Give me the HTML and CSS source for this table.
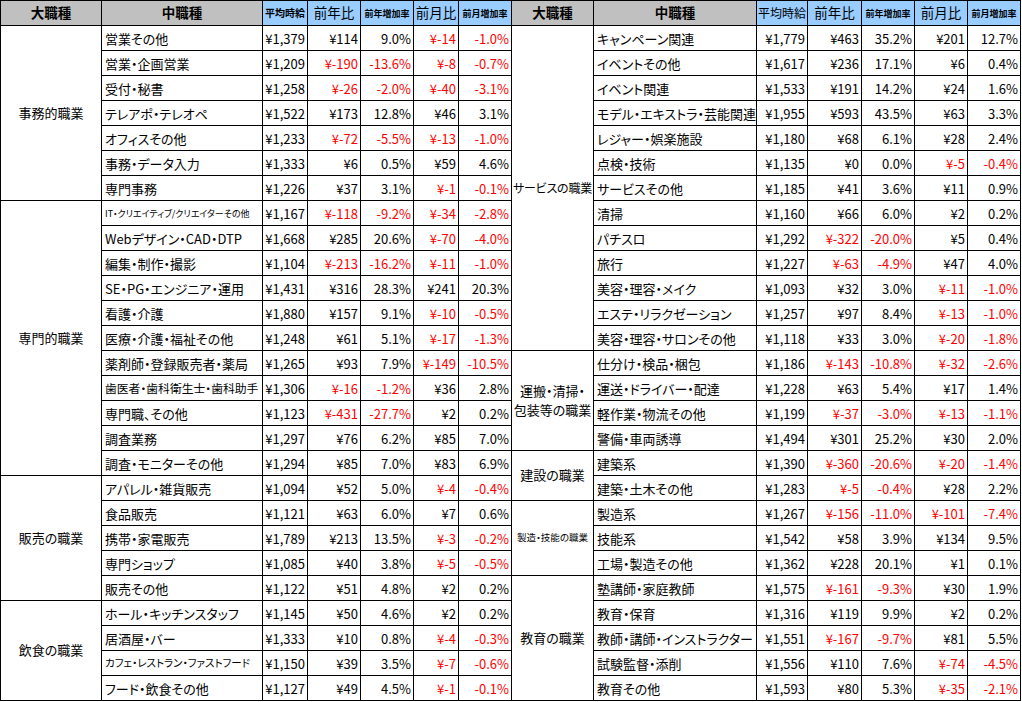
FILE: index.html
```html
<!DOCTYPE html>
<html lang="ja">
<head>
<meta charset="utf-8">
<title>職種別平均時給</title>
<link rel="stylesheet" href="styles.css">
</head>
<body>
<table class="sheet">
<colgroup>
<col class="w101"><col class="w161"><col class="w45"><col class="w53"><col class="w53"><col class="w45"><col class="w53">
<col class="w82"><col class="w163"><col class="w51"><col class="w54"><col class="w53"><col class="w53"><col class="w53">
</colgroup>
<thead>
<tr>
<th class="hg">大職種</th><th class="hg">中職種</th><th class="hb tiny">平均時給</th><th class="hb big">前年比</th><th class="hb tiny2">前年増加率</th><th class="hb big">前月比</th><th class="hb tiny2">前月増加率</th>
<th class="hg">大職種</th><th class="hg">中職種</th><th class="hb mid">平均時給</th><th class="hb big">前年比</th><th class="hb tiny2">前年増加率</th><th class="hb big">前月比</th><th class="hb tiny2">前月増加率</th>
</tr>
</thead>
<tbody>
<tr><td class="cat" rowspan="7">事務的職業</td><td class="job">営業その他</td><td class="n">¥1,379</td><td class="n">¥114</td><td class="n">9.0%</td><td class="n neg">¥-14</td><td class="n neg">-1.0%</td>
<td class="cat narrow" rowspan="13">サービスの職業</td><td class="job">キャンペーン関連</td><td class="n">¥1,779</td><td class="n">¥463</td><td class="n">35.2%</td><td class="n">¥201</td><td class="n">12.7%</td></tr>
<tr><td class="job">営業・企画営業</td><td class="n">¥1,209</td><td class="n neg">¥-190</td><td class="n neg">-13.6%</td><td class="n neg">¥-8</td><td class="n neg">-0.7%</td>
<td class="job">イベントその他</td><td class="n">¥1,617</td><td class="n">¥236</td><td class="n">17.1%</td><td class="n">¥6</td><td class="n">0.4%</td></tr>
<tr><td class="job">受付・秘書</td><td class="n">¥1,258</td><td class="n neg">¥-26</td><td class="n neg">-2.0%</td><td class="n neg">¥-40</td><td class="n neg">-3.1%</td>
<td class="job">イベント関連</td><td class="n">¥1,533</td><td class="n">¥191</td><td class="n">14.2%</td><td class="n">¥24</td><td class="n">1.6%</td></tr>
<tr><td class="job">テレアポ・テレオペ</td><td class="n">¥1,522</td><td class="n">¥173</td><td class="n">12.8%</td><td class="n">¥46</td><td class="n">3.1%</td>
<td class="job">モデル・エキストラ・芸能関連</td><td class="n">¥1,955</td><td class="n">¥593</td><td class="n">43.5%</td><td class="n">¥63</td><td class="n">3.3%</td></tr>
<tr><td class="job">オフィスその他</td><td class="n">¥1,233</td><td class="n neg">¥-72</td><td class="n neg">-5.5%</td><td class="n neg">¥-13</td><td class="n neg">-1.0%</td>
<td class="job">レジャー・娯楽施設</td><td class="n">¥1,180</td><td class="n">¥68</td><td class="n">6.1%</td><td class="n">¥28</td><td class="n">2.4%</td></tr>
<tr><td class="job">事務・データ入力</td><td class="n">¥1,333</td><td class="n">¥6</td><td class="n">0.5%</td><td class="n">¥59</td><td class="n">4.6%</td>
<td class="job">点検・技術</td><td class="n">¥1,135</td><td class="n">¥0</td><td class="n">0.0%</td><td class="n neg">¥-5</td><td class="n neg">-0.4%</td></tr>
<tr><td class="job">専門事務</td><td class="n">¥1,226</td><td class="n">¥37</td><td class="n">3.1%</td><td class="n neg">¥-1</td><td class="n neg">-0.1%</td>
<td class="job">サービスその他</td><td class="n">¥1,185</td><td class="n">¥41</td><td class="n">3.6%</td><td class="n">¥11</td><td class="n">0.9%</td></tr>

<tr><td class="cat" rowspan="11">専門的職業</td><td class="job xs">IT・クリエイティブ/クリエイターその他</td><td class="n">¥1,167</td><td class="n neg">¥-118</td><td class="n neg">-9.2%</td><td class="n neg">¥-34</td><td class="n neg">-2.8%</td>
<td class="job">清掃</td><td class="n">¥1,160</td><td class="n">¥66</td><td class="n">6.0%</td><td class="n">¥2</td><td class="n">0.2%</td></tr>
<tr><td class="job">Webデザイン・CAD・DTP</td><td class="n">¥1,668</td><td class="n">¥285</td><td class="n">20.6%</td><td class="n neg">¥-70</td><td class="n neg">-4.0%</td>
<td class="job">パチスロ</td><td class="n">¥1,292</td><td class="n neg">¥-322</td><td class="n neg">-20.0%</td><td class="n">¥5</td><td class="n">0.4%</td></tr>
<tr><td class="job">編集・制作・撮影</td><td class="n">¥1,104</td><td class="n neg">¥-213</td><td class="n neg">-16.2%</td><td class="n neg">¥-11</td><td class="n neg">-1.0%</td>
<td class="job">旅行</td><td class="n">¥1,227</td><td class="n neg">¥-63</td><td class="n neg">-4.9%</td><td class="n">¥47</td><td class="n">4.0%</td></tr>
<tr><td class="job">SE・PG・エンジニア・運用</td><td class="n">¥1,431</td><td class="n">¥316</td><td class="n">28.3%</td><td class="n">¥241</td><td class="n">20.3%</td>
<td class="job">美容・理容・メイク</td><td class="n">¥1,093</td><td class="n">¥32</td><td class="n">3.0%</td><td class="n neg">¥-11</td><td class="n neg">-1.0%</td></tr>
<tr><td class="job">看護・介護</td><td class="n">¥1,880</td><td class="n">¥157</td><td class="n">9.1%</td><td class="n neg">¥-10</td><td class="n neg">-0.5%</td>
<td class="job">エステ・リラクゼーション</td><td class="n">¥1,257</td><td class="n">¥97</td><td class="n">8.4%</td><td class="n neg">¥-13</td><td class="n neg">-1.0%</td></tr>
<tr><td class="job">医療・介護・福祉その他</td><td class="n">¥1,248</td><td class="n">¥61</td><td class="n">5.1%</td><td class="n neg">¥-17</td><td class="n neg">-1.3%</td>
<td class="job">美容・理容・サロンその他</td><td class="n">¥1,118</td><td class="n">¥33</td><td class="n">3.0%</td><td class="n neg">¥-20</td><td class="n neg">-1.8%</td></tr>
<tr><td class="job">薬剤師・登録販売者・薬局</td><td class="n">¥1,265</td><td class="n">¥93</td><td class="n">7.9%</td><td class="n neg">¥-149</td><td class="n neg">-10.5%</td>
<td class="cat" rowspan="4">運搬・清掃・<br>包装等の職業</td><td class="job">仕分け・検品・梱包</td><td class="n">¥1,186</td><td class="n neg">¥-143</td><td class="n neg">-10.8%</td><td class="n neg">¥-32</td><td class="n neg">-2.6%</td></tr>
<tr><td class="job sm">歯医者・歯科衛生士・歯科助手</td><td class="n">¥1,306</td><td class="n neg">¥-16</td><td class="n neg">-1.2%</td><td class="n">¥36</td><td class="n">2.8%</td>
<td class="job">運送・ドライバー・配達</td><td class="n">¥1,228</td><td class="n">¥63</td><td class="n">5.4%</td><td class="n">¥17</td><td class="n">1.4%</td></tr>
<tr><td class="job">専門職、その他</td><td class="n">¥1,123</td><td class="n neg">¥-431</td><td class="n neg">-27.7%</td><td class="n">¥2</td><td class="n">0.2%</td>
<td class="job">軽作業・物流その他</td><td class="n">¥1,199</td><td class="n neg">¥-37</td><td class="n neg">-3.0%</td><td class="n neg">¥-13</td><td class="n neg">-1.1%</td></tr>
<tr><td class="job">調査業務</td><td class="n">¥1,297</td><td class="n">¥76</td><td class="n">6.2%</td><td class="n">¥85</td><td class="n">7.0%</td>
<td class="job">警備・車両誘導</td><td class="n">¥1,494</td><td class="n">¥301</td><td class="n">25.2%</td><td class="n">¥30</td><td class="n">2.0%</td></tr>
<tr><td class="job">調査・モニターその他</td><td class="n">¥1,294</td><td class="n">¥85</td><td class="n">7.0%</td><td class="n">¥83</td><td class="n">6.9%</td>
<td class="cat" rowspan="2">建設の職業</td><td class="job">建築系</td><td class="n">¥1,390</td><td class="n neg">¥-360</td><td class="n neg">-20.6%</td><td class="n neg">¥-20</td><td class="n neg">-1.4%</td></tr>

<tr><td class="cat" rowspan="5">販売の職業</td><td class="job">アパレル・雑貨販売</td><td class="n">¥1,094</td><td class="n">¥52</td><td class="n">5.0%</td><td class="n neg">¥-4</td><td class="n neg">-0.4%</td>
<td class="job">建築・土木その他</td><td class="n">¥1,283</td><td class="n neg">¥-5</td><td class="n neg">-0.4%</td><td class="n">¥28</td><td class="n">2.2%</td></tr>
<tr><td class="job">食品販売</td><td class="n">¥1,121</td><td class="n">¥63</td><td class="n">6.0%</td><td class="n">¥7</td><td class="n">0.6%</td>
<td class="cat xcat" rowspan="3">製造・技能の職業</td><td class="job">製造系</td><td class="n">¥1,267</td><td class="n neg">¥-156</td><td class="n neg">-11.0%</td><td class="n neg">¥-101</td><td class="n neg">-7.4%</td></tr>
<tr><td class="job">携帯・家電販売</td><td class="n">¥1,789</td><td class="n">¥213</td><td class="n">13.5%</td><td class="n neg">¥-3</td><td class="n neg">-0.2%</td>
<td class="job">技能系</td><td class="n">¥1,542</td><td class="n">¥58</td><td class="n">3.9%</td><td class="n">¥134</td><td class="n">9.5%</td></tr>
<tr><td class="job">専門ショップ</td><td class="n">¥1,085</td><td class="n">¥40</td><td class="n">3.8%</td><td class="n neg">¥-5</td><td class="n neg">-0.5%</td>
<td class="job">工場・製造その他</td><td class="n">¥1,362</td><td class="n">¥228</td><td class="n">20.1%</td><td class="n">¥1</td><td class="n">0.1%</td></tr>
<tr><td class="job">販売その他</td><td class="n">¥1,122</td><td class="n">¥51</td><td class="n">4.8%</td><td class="n">¥2</td><td class="n">0.2%</td>
<td class="cat" rowspan="5">教育の職業</td><td class="job">塾講師・家庭教師</td><td class="n">¥1,575</td><td class="n neg">¥-161</td><td class="n neg">-9.3%</td><td class="n">¥30</td><td class="n">1.9%</td></tr>

<tr><td class="cat" rowspan="4">飲食の職業</td><td class="job">ホール・キッチンスタッフ</td><td class="n">¥1,145</td><td class="n">¥50</td><td class="n">4.6%</td><td class="n">¥2</td><td class="n">0.2%</td>
<td class="job">教育・保育</td><td class="n">¥1,316</td><td class="n">¥119</td><td class="n">9.9%</td><td class="n">¥2</td><td class="n">0.2%</td></tr>
<tr><td class="job">居酒屋・バー</td><td class="n">¥1,333</td><td class="n">¥10</td><td class="n">0.8%</td><td class="n neg">¥-4</td><td class="n neg">-0.3%</td>
<td class="job">教師・講師・インストラクター</td><td class="n">¥1,551</td><td class="n neg">¥-167</td><td class="n neg">-9.7%</td><td class="n">¥81</td><td class="n">5.5%</td></tr>
<tr><td class="job s2">カフェ・レストラン・ファストフード</td><td class="n">¥1,150</td><td class="n">¥39</td><td class="n">3.5%</td><td class="n neg">¥-7</td><td class="n neg">-0.6%</td>
<td class="job">試験監督・添削</td><td class="n">¥1,556</td><td class="n">¥110</td><td class="n">7.6%</td><td class="n neg">¥-74</td><td class="n neg">-4.5%</td></tr>
<tr><td class="job">フード・飲食その他</td><td class="n">¥1,127</td><td class="n">¥49</td><td class="n">4.5%</td><td class="n neg">¥-1</td><td class="n neg">-0.1%</td>
<td class="job">教育その他</td><td class="n">¥1,593</td><td class="n">¥80</td><td class="n">5.3%</td><td class="n neg">¥-35</td><td class="n neg">-2.1%</td></tr>
</tbody>
</table>
</body>
</html>
```
FILE: styles.css
```css
html, body {
  margin: 0;
  padding: 0;
  background: #ffffff;
}

body {
  font-family: "Noto Sans CJK JP", "Noto Sans", sans-serif;
  color: #000000;
}

.sheet {
  border-collapse: collapse;
  table-layout: fixed;
  width: 1021px;
}

.w101 { width: 101px; }
.w161 { width: 161px; }
.w45 { width: 45px; }
.w53 { width: 53px; }
.w82 { width: 82px; }
.w163 { width: 163px; }
.w51 { width: 51px; }
.w54 { width: 54px; }

.sheet th,
.sheet td {
  border: 1px solid #000000;
  padding: 0 2px;
  white-space: nowrap;
  overflow: hidden;
  line-height: 1;
  font-size: 13px;
  font-weight: 400;
  font-feature-settings: "palt";
}

.sheet th {
  height: 24px;
  text-align: center;
  vertical-align: middle;
  padding: 0;
}

.sheet td {
  height: 24px;
  vertical-align: middle;
}

.hg {
  background: #c0c0c0;
  font-size: 13.5px !important;
  font-weight: 700 !important;
}

.hb {
  background: #99ccff;
}

.big {
  font-size: 13.5px !important;
}

.mid {
  font-size: 12px !important;
}

.tiny {
  font-size: 10px !important;
  font-weight: 700 !important;
}

.tiny2 {
  font-size: 9px !important;
  font-weight: 700 !important;
}

.cat {
  text-align: center;
  line-height: 1.45 !important;
  padding: 0 !important;
}

.narrow {
  font-size: 12px !important;
  letter-spacing: -0.2px;
}

.job {
  text-align: left;
  padding-left: 3px !important;
}

.n {
  text-align: right;
  padding-right: 2px !important;
}

.neg {
  color: #ff0000;
}

.xs {
  font-size: 9px !important;
}

.sm {
  font-size: 11.8px !important;
}

.s2 {
  font-size: 10.5px !important;
}

.xcat {
  font-size: 9.5px !important;
}
```
